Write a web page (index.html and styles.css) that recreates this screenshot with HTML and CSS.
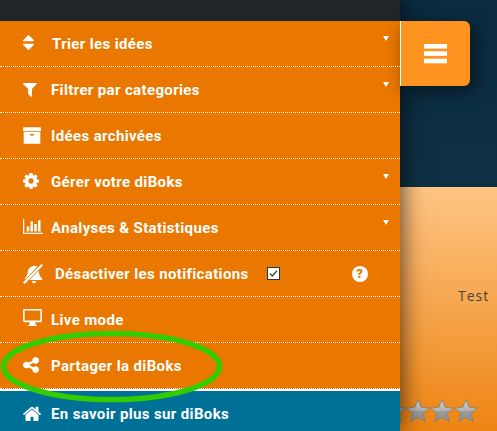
FILE: index.html
```html
<!DOCTYPE html>
<html lang="fr">
<head>
  <meta charset="UTF-8">
  <title>diBoks</title>
  <link rel="stylesheet" href="styles.css">
</head>
<body>
  <div class="page">
    <aside class="sidebar">
      <div class="topbar"></div>
      <ul class="menu">
        <li class="menu-item has-caret">
          <svg class="icon icon-sort" viewBox="384 192 1024 1408"><path d="M1408 1088q0 26-19 45l-448 448q-19 19-45 19t-45-19l-448-448q-19-19-19-45t19-45 45-19h896q26 0 45 19t19 45zm0-384q0 26-19 45t-45 19h-896q-26 0-45-19t-19-45 19-45l448-448q19-19 45-19t45 19l448 448q19 19 19 45z"/></svg>
          <span class="label label-sort">Trier les idées</span>
        </li>
        <li class="menu-item has-caret">
          <svg class="icon icon-filter" viewBox="190 256 1412 1408"><path d="M1595 295q17 41-14 70l-493 493v742q0 42-39 59-13 5-25 5-27 0-45-19l-256-256q-19-19-19-45v-486l-493-493q-31-29-14-70 17-39 59-39h1280q42 0 59 39z"/></svg>
          <span class="label">Filtrer par categories</span>
        </li>
        <li class="menu-item">
          <svg class="icon icon-archive" viewBox="64 128 1664 1536"><path d="M1088 832q0-26-19-45t-45-19h-256q-26 0-45 19t-19 45 19 45 45 19h256q26 0 45-19t19-45zm576-192v960q0 26-19 45t-45 19h-1408q-26 0-45-19t-19-45v-960q0-26 19-45t45-19h1408q26 0 45 19t19 45zm64-448v256q0 26-19 45t-45 19h-1536q-26 0-45-19t-19-45v-256q0-26 19-45t45-19h1536q26 0 45 19t19 45z"/></svg>
          <span class="label">Idées archivées</span>
        </li>
        <li class="menu-item has-caret">
          <svg class="icon icon-cog" viewBox="128 128 1536 1536"><path d="M1152 896q0-106-75-181t-181-75-181 75-75 181 75 181 181 75 181-75 75-181zm512-109v222q0 12-8 23t-20 13l-185 28q-19 54-39 91 35 50 107 138 10 12 10 25t-9 23q-27 37-99 108t-94 71q-12 0-26-9l-138-108q-44 23-91 38-16 136-29 186-7 28-36 28h-222q-14 0-24.5-8.5t-11.5-21.5l-28-184q-49-16-90-37l-141 107q-10 9-25 9-14 0-25-11-126-114-165-168-7-10-7-23 0-12 8-23 15-21 51-66.5t54-70.5q-27-50-41-99l-183-27q-13-2-21-12.5t-8-23.5v-222q0-12 8-23t19-13l186-28q14-46 39-92-40-57-107-138-10-12-10-24 0-10 9-23 26-36 98.5-107.5t94.5-71.5q13 0 26 10l138 107q44-23 91-38 16-136 29-186 7-28 36-28h222q14 0 24.5 8.5t11.5 21.5l28 184q49 16 90 37l142-107q9-9 24-9 13 0 25 10 129 119 165 170 7 8 7 22 0 12-8 23-15 21-51 66.5t-54 70.5q26 50 41 98l183 28q13 2 21 12.5t8 23.5z"/></svg>
          <span class="label">Gérer votre diBoks</span>
        </li>
        <li class="menu-item has-caret">
          <svg class="icon icon-chart" viewBox="0 128 2048 1536"><path d="M640 896v512h-256v-512h256zm384-512v1024h-256v-1024h256zm1024 1152v128h-2048v-1536h128v1408h1920zm-640-896v768h-256v-768h256zm384-384v1152h-256v-1152h256z"/></svg>
          <span class="label">Analyses &amp; Statistiques</span>
        </li>
        <li class="menu-item">
          <svg class="icon icon-bell" viewBox="0 0 20 20">
            <path d="M9.500 2.300c2-.8 3.700-.5 5 .3L2.600 15H1.200C4 12.500 4.500 10 4.800 7.500 5 5 7 3.100 9.500 2.300z"/>
            <path d="M18.400 0 20 1.400 1.600 20 0 18.500z"/>
            <path d="M15.800 6.500c.1 2.800.6 5.600 3.400 8V16H6.600z"/>
            <path d="M9 17h4.200c-.2 1.500-1 2.300-2.100 2.300S9.200 18.500 9 17z"/>
          </svg>
          <span class="label label-bell">Désactiver les notifications</span>
          <span class="check"><svg viewBox="0 0 11 11"><path d="M2 5.500 4.300 8 9 2.800"/></svg></span>
          <span class="help">?</span>
        </li>
        <li class="menu-item">
          <svg class="icon icon-desktop" viewBox="0 0 20 18"><path d="M1.500 0h17A1.500 1.500 0 0 1 20 1.500v11a1.500 1.500 0 0 1-1.500 1.500H13v2l1.500 1.200V18h-9v-.8L7 16v-2H1.500A1.500 1.500 0 0 1 0 12.500v-11A1.500 1.500 0 0 1 1.500 0zm.2 1.500v10.800h16.600V1.500z"/></svg>
          <span class="label">Live mode</span>
        </li>
        <li class="menu-item">
          <svg class="icon icon-share" viewBox="128 128 1536 1536"><path d="M1344 1024q133 0 226.500 93.500t93.500 226.500-93.500 226.500-226.500 93.500-226.500-93.500-93.500-226.500q0-12 2-34l-360-180q-92 86-218 86-133 0-226.500-93.500t-93.500-226.500 93.500-226.500 226.500-93.500q126 0 218 86l360-180q-2-22-2-34 0-133 93.500-226.500t226.500-93.500 226.500 93.500 93.500 226.500-93.500 226.500-226.500 93.500q-126 0-218-86l-360 180q2 22 2 34t-2 34l360 180q92-86 218-86z"/></svg>
          <span class="label">Partager la diBoks</span>
        </li>
      </ul>
      <div class="about">
        <svg class="icon icon-home" viewBox="97 192 1598 1344"><path d="M1472 992v480q0 26-19 45t-45 19h-384v-384h-256v384h-384q-26 0-45-19t-19-45v-480q0-1 .5-3t.5-3l575-474 575 474q1 2 1 6zm223-69l-62 74q-8 9-21 11h-3q-13 0-21-7l-692-577-692 577q-12 8-24 7-13-2-21-11l-62-74q-8-10-7-23.500t11-21.500l719-599q32-26 76-26t76 26l244 204v-195q0-14 9-23t23-9h192q14 0 23 9t9 23v408l219 182q10 8 11 21.500t-7 23.500z"/></svg>
        <span class="label">En savoir plus sur diBoks</span>
      </div>
      <button class="toggle">
        <svg viewBox="0 0 23 20"><rect y="0" width="23" height="4.600"/><rect y="7.300" width="23" height="4.600"/><rect y="14.700" width="23" height="4.600"/></svg>
      </button>
    </aside>

    <main class="main">
      <div class="banner"></div>
      <div class="card">
        <p class="card-title">Test</p>
        <div class="stars">
          <svg class="star" viewBox="0 0 24 24"><use href="#star"/></svg>
          <svg class="star" viewBox="0 0 24 24"><use href="#star"/></svg>
          <svg class="star" viewBox="0 0 24 24"><use href="#star"/></svg>
          <svg class="star" viewBox="0 0 24 24"><use href="#star"/></svg>
        </div>
      </div>
    </main>
  </div>

  <svg class="defs" width="0" height="0">
    <defs>
      <linearGradient id="star-fill" x1="0" y1="0" x2="0" y2="1">
        <stop offset="0" stop-color="#d8d8d8"/>
        <stop offset=".5" stop-color="#b0b0b0"/>
        <stop offset=".55" stop-color="#9a9a9a"/>
        <stop offset="1" stop-color="#8e8e8e"/>
      </linearGradient>
      <polygon id="star" points="12,.8 15.300,8.300 23.400,9.100 17.300,14.500 19.100,22.500 12,18.300 4.900,22.500 6.700,14.500 .6,9.100 8.700,8.300" fill="url(#star-fill)" stroke="#7d7d7d" stroke-width=".8" stroke-linejoin="round"/>
    </defs>
  </svg>

  <svg class="circle-mark" viewBox="0 0 230 80">
    <ellipse cx="111.500" cy="38.500" rx="108" ry="33"/>
  </svg>
</body>
</html>
```

FILE: styles.css
```css
* {
  box-sizing: border-box;
}

html, body {
  margin: 0;
  padding: 0;
  height: 431px;
  overflow: hidden;
}

body {
  font-family: 'Roboto', sans-serif;
  position: relative;
  background-color: #0c2e42;
}

.page {
  display: flex;
  height: 431px;
}

.sidebar {
  position: relative;
  z-index: 2;
  flex: 0 0 400px;
  display: flex;
  flex-direction: column;
  background-color: #ea7800;
  box-shadow: 2px 0 22px rgba(0, 0, 0, 0.65);
}

.topbar {
  height: 21px;
  background-color: #1f2528;
}

.menu {
  list-style: none;
  margin: 0;
  padding: 0;
}

.menu-item {
  position: relative;
  display: flex;
  align-items: center;
  height: 46px;
  padding-left: 23px;
  border-bottom: 1px dotted #fff;
  color: #fff;
}

.has-caret::after {
  content: '';
  position: absolute;
  left: 383px;
  top: 15px;
  border-left: 3px solid transparent;
  border-right: 3px solid transparent;
  border-top: 5px solid #fff;
}

.label {
  font-size: 15px;
  font-weight: 700;
  letter-spacing: 0.36px;
  color: #fff;
  margin-left: 28px;
}

.icon {
  flex: none;
  fill: #fff;
  width: 18px;
  height: 18px;
  margin-right: -18px;
}

.icon-sort {
  width: 11px;
  height: 15px;
  margin-right: -11px;
  margin-top: -2px;
}

.icon-filter {
  width: 14px;
  height: 14px;
  margin-right: -14px;
}

.icon-archive {
  width: 18px;
  height: 17px;
  margin-right: -18px;
}

.icon-cog {
  width: 16px;
  height: 16px;
  margin-right: -16px;
  margin-top: -2px;
}

.icon-chart {
  width: 20px;
  height: 15px;
  margin-right: -20px;
  margin-top: -2px;
}

.icon-bell {
  width: 20px;
  height: 20px;
  margin-right: -20px;
}

.icon-desktop {
  width: 19px;
  height: 17px;
  margin-right: -19px;
  margin-top: -4px;
}

.icon-share {
  width: 16px;
  height: 16px;
  margin-right: -16px;
  margin-top: -2px;
}

.icon-home {
  width: 18px;
  height: 15px;
  margin-right: -18px;
  margin-top: -1px;
}

.label-sort {
  margin-left: 29px;
}

.label-bell {
  margin-left: 32px;
}

.check {
  display: flex;
  width: 13px;
  height: 13px;
  margin-left: 18px;
  background-color: #fff;
  border: 1px solid #333;
}

.check svg {
  width: 11px;
  height: 11px;
  fill: none;
  stroke: #444;
  stroke-width: 1.3;
}

.help {
  width: 16px;
  height: 16px;
  margin-left: 72px;
  border-radius: 50%;
  background-color: #fff;
  color: #ea7800;
  font-size: 13px;
  font-weight: 900;
  line-height: 16px;
  text-align: center;
}

.about {
  flex: 1;
  display: flex;
  align-items: center;
  padding-left: 23px;
  padding-top: 5px;
  border-top: 2px solid #fff;
  background-color: #007196;
}

.toggle {
  position: absolute;
  left: 400px;
  top: 21px;
  display: flex;
  align-items: center;
  justify-content: center;
  width: 70px;
  height: 65px;
  padding: 0;
  border: 0;
  border-left: 1px solid #fff;
  border-radius: 0 6px 6px 0;
  background-color: #ff931f;
  box-shadow: 5px 5px 18px rgba(0, 0, 0, 0.5);
}

.toggle svg {
  width: 23px;
  height: 20px;
  fill: #fff;
}

.main {
  flex: 1;
  display: flex;
  flex-direction: column;
  min-width: 0;
}

.banner {
  height: 187px;
  background: linear-gradient(#0a2c41, #0e3044);
}

.card {
  flex: 1;
  display: flex;
  flex-direction: column;
  background: linear-gradient(#ffc585, #ed8412);
}

.card-title {
  margin: 100px 0 0 58px;
  font-family: 'Open Sans', sans-serif;
  font-size: 14px;
  line-height: 18px;
  letter-spacing: 1px;
  color: #444;
}

.stars {
  display: flex;
  justify-content: flex-end;
  margin-top: 94px;
  padding-right: 19px;
}

.star {
  flex: none;
  width: 24px;
  height: 24px;
}

.defs {
  position: absolute;
}

.circle-mark {
  position: absolute;
  z-index: 3;
  left: 0;
  top: 328px;
  width: 230px;
  height: 80px;
  fill: none;
  stroke: #33cc00;
  stroke-width: 5.5;
}
```
